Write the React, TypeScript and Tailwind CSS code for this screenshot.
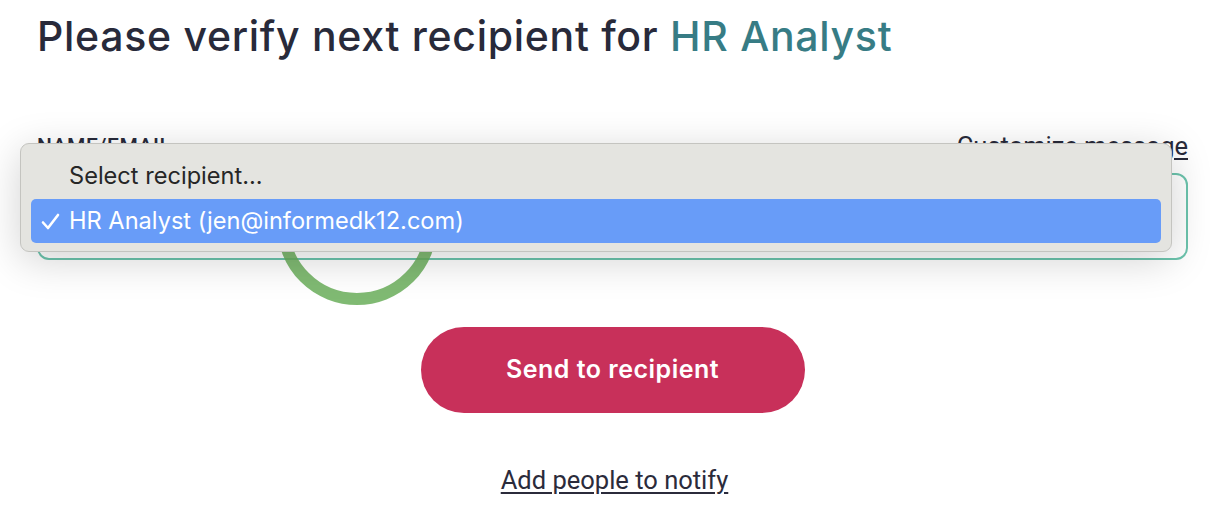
import React from 'react';

const App: React.FC = () => {
  return (
    <div className="relative w-[1210px] h-[508px] bg-white overflow-hidden font-['Inter',sans-serif]">
      <div className="pl-[37px] pr-[22px] pt-[11px]">
        <h1 className="text-[41px] leading-[50px] font-medium text-[#282a3a] tracking-[0.7px]">
          Please verify next recipient for <span className="text-[#377c85]">HR Analyst</span>
        </h1>

        <div className="mt-[72px] flex items-end justify-between leading-[26px] text-[#282a3a] font-['Roboto',sans-serif]">
          <span className="text-[21px] font-medium tracking-wide">NAME/EMAIL</span>
          <a className="text-[25.5px] underline underline-offset-[3px]">Customize message</a>
        </div>
        <div className="mt-[14px] h-[87px] rounded-[12px] border-2 border-[#6cc4ad] bg-white" />

        <div className="mt-[67px] flex justify-center">
          <button className="w-[384px] h-[86px] rounded-full bg-[#c8305a] text-white text-[25px] tracking-[0.5px] font-semibold font-['Inter',sans-serif]">
            Send to recipient
          </button>
        </div>

        <div className="mt-[52px] flex justify-center pl-[4px]">
          <a className="underline underline-offset-[3px] text-[25.5px] leading-[30px] text-[#2b2b3b] font-['Roboto',sans-serif]">
            Add people to notify
          </a>
        </div>
      </div>

      {/* loading spinner behind popup */}
      <svg className="absolute left-[277px] top-[143px]" width="160" height="164" viewBox="0 0 160 164">
        <circle cx="80" cy="82" r="74" fill="none" stroke="#6aae5a" strokeOpacity="0.85" strokeWidth="12" />
      </svg>

      {/* open native select popup */}
      <div className="absolute left-[20px] top-[143px] w-[1152px] h-[109px] rounded-[9px] bg-[#e4e4e0] border border-[#c4c4c0] shadow-[0_8px_40px_rgba(0,0,0,0.18)] px-[10px] pt-[9px] font-['Inter',sans-serif] text-[23.6px]">
        <div className="h-[46px] flex items-center pl-[38px] text-[#262626]">Select recipient...</div>
        <div className="h-[44px] flex items-center rounded-[5px] bg-[#689cf8] text-white">
          <span className="w-[38px] pl-[10px] flex items-center">
            <svg width="19" height="17" viewBox="0 0 19 17">
              <path d="M2 9.5 L7 15 L17 2" fill="none" stroke="white" strokeWidth="2.6" strokeLinecap="round" strokeLinejoin="round" />
            </svg>
          </span>
          <span>HR Analyst (jen@informedk12.com)</span>
        </div>
      </div>
    </div>
  );
};

export default App;
